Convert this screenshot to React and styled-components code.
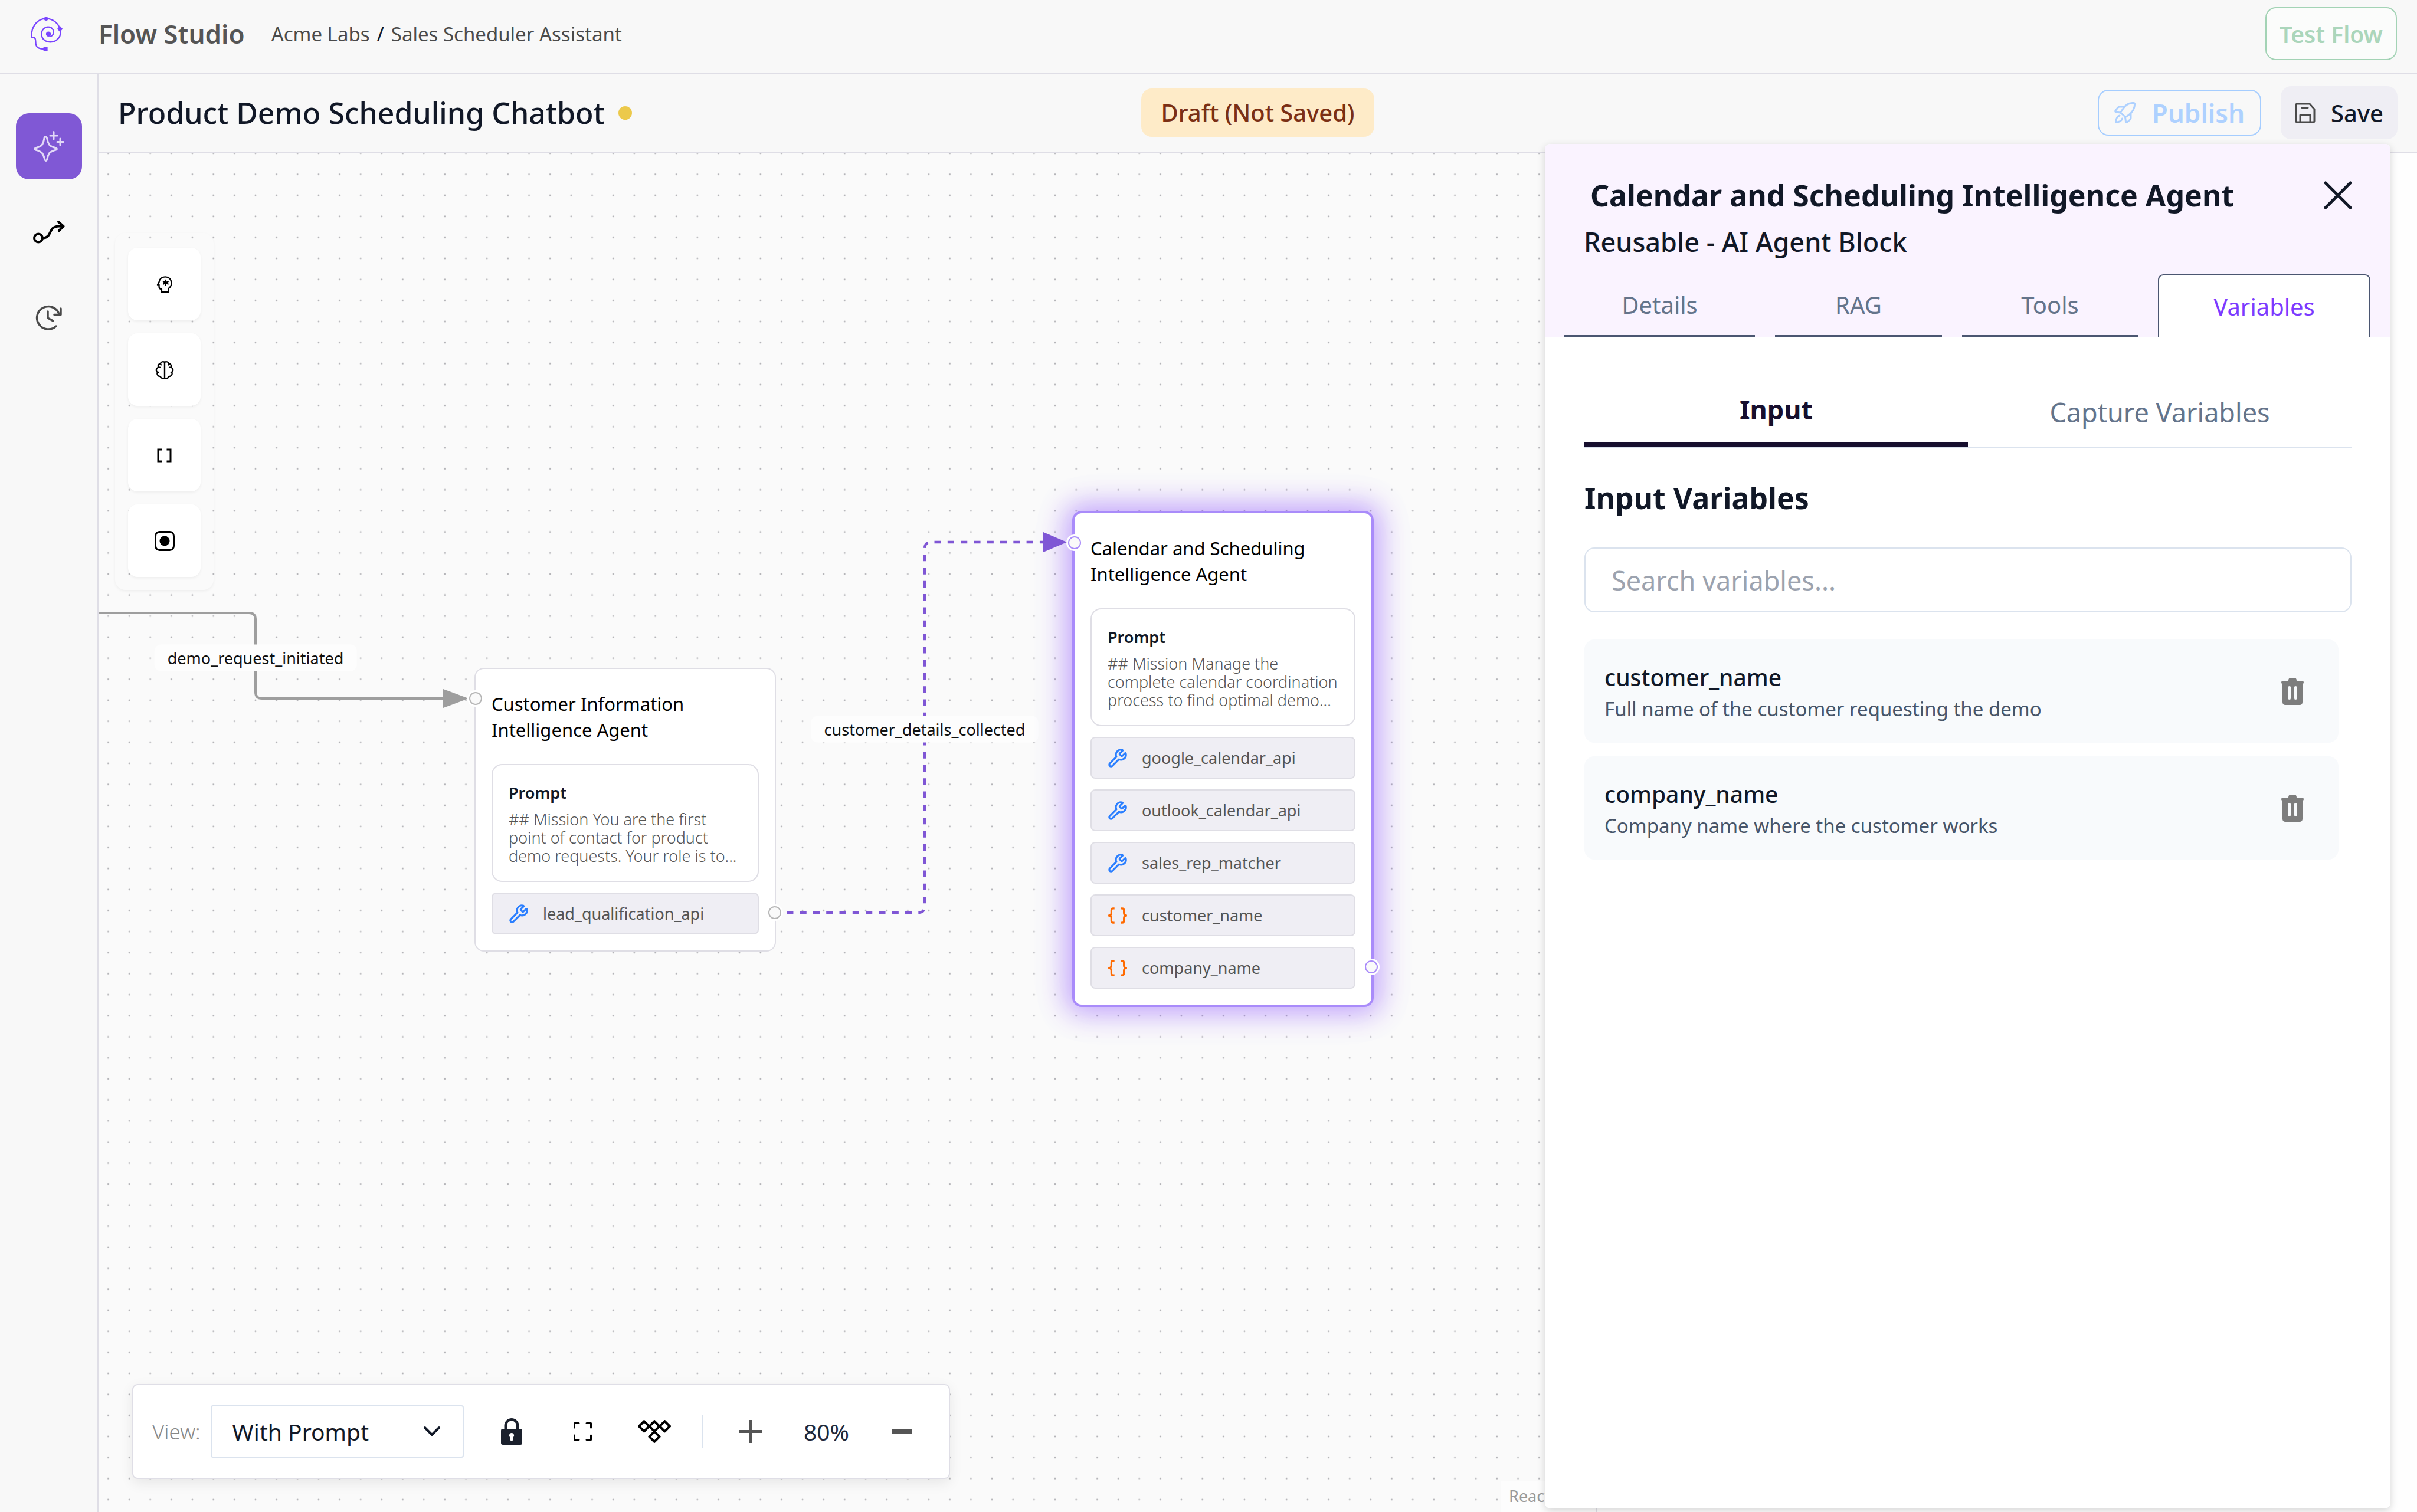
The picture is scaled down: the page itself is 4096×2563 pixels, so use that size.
import React from "react";
import styled, { createGlobalStyle, css } from "styled-components";
import { Wrench } from "lucide-react";

const GlobalStyle = createGlobalStyle`
  *, *::before, *::after { box-sizing: border-box; }
  html, body { margin: 0; padding: 0; }
  body {
    font-family: "Noto Sans", sans-serif;
    color: #111827;
    background: #f8f8f8;
    overflow: hidden;
  }
  button, input, select { font-family: inherit; margin: 0; }
  h1, h2, h3, p, ul { margin: 0; padding: 0; }
  ul { list-style: none; }
  svg { display: block; flex: none; }
`;

/* ---------- shell ---------- */

const Shell = styled.div`
  display: flex;
  flex-direction: column;
  height: 100vh;
`;

const TopBar = styled.header`
  display: flex;
  align-items: center;
  padding: 12px 34px 21px 49px;
  border-bottom: 2px solid #dfdee6;
`;

const Brand = styled.div`
  margin-left: 58px;
  font-size: 44px;
  line-height: 60px;
  font-weight: 600;
  color: #555;
`;

const Breadcrumb = styled.nav`
  display: flex;
  gap: 12px;
  margin-left: 45px;
  font-size: 33px;
  line-height: 45px;

  a {
    color: #4a4a4a;
    text-decoration: none;
  }
`;

const Button = styled.button`
  display: flex;
  align-items: center;
  justify-content: center;
  height: ${(p) => p.$height}px;
  padding: 0 22px;
  border: 2px solid transparent;
  border-radius: 18px;
  background: transparent;
  font-size: 40px;
  font-weight: 500;
`;

const TestButton = styled(Button)`
  margin-left: auto;
  border-color: #a3d3b5;
  background: #fbfcfb;
  color: #abd6bb;
  font-size: 39px;
  font-weight: 600;
`;

const PublishButton = styled(Button)`
  gap: 28px;
  padding: 0 26px;
  border-color: #a5cdff;
  color: #aed1ff;
  font-size: 44px;
  font-weight: 600;
`;

const SaveButton = styled(Button)`
  gap: 26px;
  background: #efeef4;
  color: #111827;
`;

const Body = styled.div`
  display: flex;
  flex: 1;
  min-height: 0;
`;

const Sidebar = styled.nav`
  display: flex;
  flex-direction: column;
  align-items: center;
  gap: 33px;
  flex: none;
  width: 167px;
  padding-top: 67px;
  border-right: 2px solid #dfdee6;
`;

const SideButton = styled.button`
  display: grid;
  place-items: center;
  width: 112px;
  height: 112px;
  padding: 0;
  border: 0;
  border-radius: 22px;
  background: ${(p) => (p.$active ? "#8058d5" : "transparent")};
  color: ${(p) => p.$color};
`;

const Main = styled.main`
  display: flex;
  flex: 1;
  flex-direction: column;
  min-width: 0;
`;

const TitleBar = styled.div`
  display: grid;
  grid-template-columns: 1fr auto 1fr;
  align-items: center;
  height: 134px;
  padding: 0 33px;
  border-bottom: 2px solid #dfdee6;
`;

const FlowTitle = styled.h1`
  display: flex;
  align-items: center;
  gap: 23px;
  font-size: 50px;
  line-height: 66px;
  font-weight: 500;
`;

const UnsavedDot = styled.span`
  width: 23px;
  height: 23px;
  border-radius: 50%;
  background: #ecc94b;
`;

const StatusBadge = styled.div`
  padding: 11px 33px;
  border-radius: 18px;
  background: #feebc8;
  color: #7b2f14;
  font-size: 40px;
  line-height: 60px;
  font-weight: 500;
`;

const TitleActions = styled.div`
  display: flex;
  align-items: center;
  justify-content: flex-end;
  gap: 33px;
`;

const Workspace = styled.div`
  display: flex;
  flex: 1;
  min-height: 0;
`;

/* ---------- canvas ---------- */

const Canvas = styled.section`
  position: relative;
  flex: 1;
  min-width: 0;
  overflow: hidden;
  background: #fafafa;
`;

const CanvasLayer = styled.svg`
  position: absolute;
  inset: 0;
  width: 100%;
  height: 100%;
  pointer-events: none;
`;

const Palette = styled.div`
  position: absolute;
  left: 28px;
  top: 136px;
  display: flex;
  flex-direction: column;
  gap: 22px;
  padding: 25px 22px 22px;
  border-radius: 18px;
  box-shadow: 0 2px 5px rgba(0, 0, 0, 0.05);
`;

const PaletteButton = styled.button`
  display: grid;
  place-items: center;
  width: 123px;
  height: 123px;
  padding: 0;
  border: 0;
  border-radius: 16px;
  background: #fff;
  color: #000;
  box-shadow: 0 2px 5px rgba(0, 0, 0, 0.05);
`;

const EdgeLabel = styled.div`
  position: absolute;
  left: ${(p) => p.$x}px;
  top: ${(p) => p.$y}px;
  transform: translate(-50%, -50%);
  padding: 2px 22px;
  border-radius: 11px;
  background: #fdfdfd;
  color: #111;
  font-size: 27px;
  line-height: 41px;
  white-space: nowrap;
`;

const NodeCard = styled.article`
  position: absolute;
  left: ${(p) => p.$x}px;
  top: ${(p) => p.$y}px;
  display: flex;
  flex-direction: column;
  gap: 18px;
  width: 511px;
  padding: 37px 27px 27px;
  border-radius: 16px;
  background: #fff;
  ${(p) =>
    p.$selected
      ? css`
          border: 4px solid #a98bfa;
          box-shadow: 0 0 45px 11px rgba(124, 58, 255, 0.4), 0 0 67px 11px rgba(124, 58, 255, 0.08);
        `
      : css`
          border: 2px solid #dfdee5;
        `}
`;

const NodeTitle = styled.h3`
  margin-bottom: 18px;
  font-size: 31px;
  line-height: 44px;
  font-weight: 400;
  color: #000;
`;

const PromptBox = styled.div`
  padding: 27px;
  border: 2px solid #dfdee5;
  border-radius: 18px;
`;

const PromptLabel = styled.div`
  margin-bottom: 9px;
  font-size: 27px;
  line-height: 40px;
  font-weight: 600;
`;

const PromptText = styled.p`
  font-size: 27px;
  line-height: 31px;
  font-weight: 300;
  color: #555;
`;

const Resources = styled.ul`
  display: flex;
  flex-direction: column;
  gap: 18px;
`;

const Resource = styled.li`
  display: flex;
  align-items: center;
  gap: 24px;
  height: 71px;
  padding: 0 27px;
  border: 2px solid #dfdee5;
  border-radius: 8px;
  background: #efeef4;
  color: #555;
  font-size: 27px;
`;

const Handle = styled.span`
  position: absolute;
  width: 22px;
  height: 22px;
  border: 2px solid ${(p) => (p.$selected ? "#a98bfa" : "#b5b5b5")};
  border-radius: 50%;
  background: #fafafa;
  box-shadow: 0 0 0 3px #fff;
  ${(p) => (p.$side === "left" ? "left: -11px; top: 39px;" : "right: -11px; bottom: 53px;")}
`;

const Controls = styled.div`
  position: absolute;
  left: 57px;
  bottom: 56px;
  display: flex;
  align-items: center;
  gap: 40px;
  height: 161px;
  padding: 0 39px 0 32px;
  border: 2px solid #dfdee6;
  border-radius: 9px;
  background: #fff;
  box-shadow: 0 7px 22px rgba(0, 0, 0, 0.08);
`;

const ViewField = styled.div`
  position: relative;
  display: flex;
  align-items: center;
  gap: 18px;

  label {
    color: #888;
    font-size: 35px;
    font-weight: 300;
  }

  svg {
    position: absolute;
    right: 39px;
    pointer-events: none;
  }
`;

const ViewSelect = styled.select`
  appearance: none;
  width: 429px;
  height: 89px;
  padding: 0 80px 0 34px;
  border: 2px solid #dbe3ee;
  border-radius: 4px;
  background: #fff;
  color: #111827;
  font-size: 39px;
`;

const ControlButton = styled.button`
  display: grid;
  place-items: center;
  width: 81px;
  height: 81px;
  padding: 0;
  border: 0;
  background: transparent;
  color: ${(p) => p.$color || "#000"};
`;

const Divider = styled.span`
  width: 2px;
  height: 56px;
  background: #dbe3ee;
`;

const ZoomValue = styled.output`
  width: 96px;
  text-align: center;
  color: #1e293b;
  font-size: 39px;
`;

const Attribution = styled.a`
  position: absolute;
  right: 0;
  bottom: 0;
  padding: 7px 13px 8px;
  background: rgba(255, 255, 255, 0.6);
  color: #999;
  font-size: 27px;
  line-height: 38px;
  text-decoration: none;
`;

/* ---------- inspector ---------- */

const Inspector = styled.aside`
  position: relative;
  flex: none;
  width: 1391px;
  border-left: 2px solid #dfdee6;
  background: #fefefe;
`;

const Panel = styled.section`
  position: absolute;
  left: -89px;
  right: 45px;
  top: -15px;
  bottom: 6px;
  display: flex;
  flex-direction: column;
  border-radius: 9px;
  background: #fff;
  box-shadow: 0 4px 14px rgba(0, 0, 0, 0.16);
`;

const PanelHeader = styled.header`
  padding: 54px 34px 0 33px;
  border-radius: 9px 9px 0 0;
  background: #faf3ff;
`;

const PanelHeading = styled.div`
  display: flex;
  align-items: center;
  justify-content: space-between;
  padding: 0 31px 0 44px;
`;

const SectionTitle = styled.h2`
  font-size: 50px;
  line-height: 66px;
  font-weight: 700;
`;

const PanelSubtitle = styled.p`
  padding: 16px 33px 25px;
  font-size: 45px;
  line-height: 60px;
  font-weight: 500;
`;

const CloseButton = styled.button`
  display: grid;
  place-items: center;
  padding: 0;
  border: 0;
  background: transparent;
  color: #111827;
`;

const TabRow = styled.div`
  display: grid;
  grid-template-columns: 323fr 283fr 298fr 360fr;
  gap: 34px;
`;

const Tab = styled.button`
  height: 106px;
  padding: 0;
  font-size: 40px;
  ${(p) =>
    p.$active
      ? css`
          border: 2px solid #4b5671;
          border-bottom: 0;
          border-radius: 9px 9px 0 0;
          background: #fff;
          color: #7c3aff;
        `
      : css`
          border: 0;
          border-bottom: 3px solid #4b5671;
          background: transparent;
          color: #64748b;
        `}
`;

const PanelBody = styled.div`
  padding: 67px 66px 0 67px;
`;

const SubTabRow = styled.div`
  display: grid;
  grid-template-columns: 1fr 1fr;
  border-bottom: 2px solid #dbe3ee;
`;

const SubTab = styled.button`
  height: 120px;
  padding: 0;
  border: 0;
  border-bottom: ${(p) => (p.$active ? "9px solid #170f2e" : "0")};
  background: transparent;
  color: ${(p) => (p.$active ? "#170f2e" : "#64748b")};
  font-size: 45px;
  font-weight: ${(p) => (p.$active ? 700 : 400)};
`;

const VariablesSection = styled.section`
  padding-top: 51px;
`;

const SearchInput = styled.input`
  display: block;
  width: 100%;
  height: 110px;
  margin: 51px 0 46px;
  padding: 0 44px;
  border: 2px solid #dbe3ee;
  border-radius: 17px;
  background: #fff;
  color: #111827;
  font-size: 45px;

  &::placeholder {
    color: #9ca3af;
    opacity: 1;
  }
`;

const VariableList = styled.ul`
  display: flex;
  flex-direction: column;
  gap: 23px;
  padding-right: 22px;
`;

const VariableCard = styled.li`
  display: flex;
  align-items: center;
  justify-content: space-between;
  padding: 34px 45px 34px 34px;
  border-radius: 17px;
  background: #f8fafc;
`;

const VariableName = styled.div`
  font-size: 39px;
  line-height: 60px;
  font-weight: 500;
`;

const VariableHint = styled.p`
  font-size: 33px;
  line-height: 47px;
  color: #475569;
`;

const DeleteButton = styled.button`
  display: grid;
  place-items: center;
  width: 66px;
  height: 66px;
  padding: 0;
  border: 0;
  background: transparent;
  color: #7d7d7d;
`;

/* ---------- icons ---------- */

const Stroke = ({ w, h, box, sw, children }) => (
  <svg
    width={w}
    height={h}
    viewBox={box || `0 0 ${w} ${h}`}
    fill="none"
    stroke="currentColor"
    strokeWidth={sw}
    strokeLinecap="round"
    strokeLinejoin="round"
    aria-hidden="true"
  >
    {children}
  </svg>
);

const Logo = () => (
  <svg width="60" height="62" viewBox="124 66 250 266" fill="none" stroke="#7a45ff" strokeWidth="10" aria-hidden="true">
    <path d="M138 228C136 145 182 90 245 90C300 90 336 128 345 165" />
    <path d="M138 225H148C172 225 168 248 170 272C172 298 190 311 230 311" />
    <path d="M346 165C362 215 328 260 275 260C236 260 212 233 212 202C212 172 234 150 260 150C286 150 300 170 300 188C300 208 286 221 268 219" />
    <g fill="#7a45ff" stroke="none">
      <circle cx="262" cy="202" r="18" />
      <circle cx="245" cy="91" r="14" />
      <path d="M346 143L366 165L346 187L326 165Z" />
      <rect x="226" y="296" width="30" height="31" />
    </g>
  </svg>
);

const SparkleIcon = () => (
  <Stroke w={52} h={53} sw={3}>
    <path d="M20 10Q22 10 22.500 12C25 24 27 26 38 29Q41 30.500 38 32C27 35 25 37 22.500 49Q21 52 19 49C16 37 14 35 3 32Q0 30.500 3 29C14 26 16 24 18 12Q18.500 10 20 10Z" />
    <path d="M34 1.500V14M28 8H40M45 13V24M40 18.500H50.500" />
  </Stroke>
);

const RouteIcon = () => (
  <Stroke w={54} h={39} sw={4}>
    <circle cx="9" cy="29.500" r="7" />
    <path d="M16 29.500C34 29.500 24 9.500 44 9.500H51M43 2L51.500 9.500L44 17" />
  </Stroke>
);

const HistoryIcon = () => (
  <Stroke w={46} h={43} sw={3.5}>
    <path d="M35 36A19.300 19.300 0 1 1 40 15M43 6V16.500H32M21 11V22L30 27" />
  </Stroke>
);

const HeadIcon = () => (
  <Stroke w={28} h={30} box="122 90 120 130" sw={10}>
    <path d="M186 100C160 100 143 117 141 138L130 158H141V176Q143 190 160 190V212H210V186C226 175 233 160 232 142C229 115 210 100 186 100Z" />
    <path d="M190 124V162M173 134L207 153M207 134L173 153" />
  </Stroke>
);

const BrainIcon = () => (
  <Stroke w={34} h={34} box="108 706 144 144" sw={10}>
    <path d="M180 722V836" />
    <path d="M180 723C166 715 152 722 150 733C137 734 129 746 134 760C119 765 115 786 128 795C122 812 134 825 148 825C156 840 172 842 180 836M134 760H146M128 795H134M150 733L154 742" />
    <path d="M180 723C194 715 208 722 210 733C223 734 231 746 226 760C241 765 245 786 232 795C238 812 226 825 212 825C204 840 188 842 180 836M226 760H214M232 795H226M210 733L206 742" />
  </Stroke>
);

const BracketsIcon = () => (
  <svg width="25" height="24" viewBox="0 0 25 24" fill="none" stroke="currentColor" strokeWidth="3" aria-hidden="true">
    <path d="M8.500 2H2V22H8.500M16.500 2H23V22H16.500" />
  </svg>
);

const RecordIcon = () => (
  <Stroke w={34} h={34} sw={3}>
    <rect x="1.500" y="1.500" width="31" height="31" rx="7" />
    <circle cx="17" cy="17" r="8.500" fill="currentColor" stroke="none" />
  </Stroke>
);

const BracesIcon = () => (
  <svg width="34" height="28" viewBox="0 0 35 29" fill="none" stroke="#ff6a00" strokeWidth="3.300" aria-hidden="true">
    <path d="M12 2H9.500Q6.500 2 6.500 5V10Q6.500 14.500 1 14.500Q6.500 14.500 6.500 19V24Q6.500 27 9.500 27H12" />
    <path d="M23 2H25.500Q28.500 2 28.500 5V10Q28.500 14.500 34 14.500Q28.500 14.500 28.500 19V24Q28.500 27 25.500 27H23" />
  </svg>
);

const RocketIcon = () => (
  <Stroke w={36} h={36} sw={3}>
    <path d="M33.500 1.500C25 1 19 5 15 11L10.500 18L19 25.500C27 21 35 14 34.500 2.500Z" />
    <path d="M16 8H9Q7 8 6 9.500L2 14.500Q1 16.500 3 17L10.500 18M28 19.500V27Q28 28.500 27 29.500L22 34Q20 35 19.500 33L18.500 25.500" />
    <path d="M9 23C4 24 3 29 2.500 34C8 34 12.500 32.500 13.500 28" />
  </Stroke>
);

const SaveIcon = () => (
  <Stroke w={35} h={35} sw={3}>
    <path
      stroke="#4a4a4a"
      d="M4 2H25L33 11V31Q33 33 31 33H4Q2 33 2 31V4Q2 2 4 2ZM9 33V21.500Q9 20.500 10 20.500H25Q26 20.500 26 21.500V33M12 8.500H22"
    />
  </Stroke>
);

const LockIcon = () => (
  <svg width="36" height="45" viewBox="0 0 36 45" fill="currentColor" fillRule="evenodd" aria-hidden="true">
    <path d="M5.500 18V12.500A12.500 12.500 0 0 1 30.500 12.500V18H33A3 3 0 0 1 36 21V42A3 3 0 0 1 33 45H3A3 3 0 0 1 0 42V21A3 3 0 0 1 3 18ZM10 18H26V12.500A8 8 0 0 0 10 12.500ZM18 25A4 4 0 0 0 16 32.500V37A2 2 0 0 0 20 37V32.500A4 4 0 0 0 18 25Z" />
  </svg>
);

const FitIcon = () => (
  <Stroke w={31} h={31} sw={3}>
    <path d="M9 1.500H1.500V9M22 1.500H29.500V9M1.500 22V29.500H9M29.500 22V29.500H22" />
  </Stroke>
);

const LayoutIcon = () => (
  <Stroke w={56} h={39} sw={4}>
    {[[10.5, 10.7], [28, 10.7], [45.5, 10.7], [28, 28.3]].map(([x, y]) => (
      <path key={`${x}-${y}`} d={`M${x} ${y - 8.6}l8.600 8.600l-8.600 8.600l-8.600 -8.600Z`} />
    ))}
  </Stroke>
);

const TrashIcon = () => (
  <svg width="38" height="46" viewBox="0 0 38 46" fill="currentColor" fillRule="evenodd" aria-hidden="true">
    <path d="M12 5Q12 0 16 0H22Q26 0 26 5H35Q38 5 38 8Q38 10 36 10V41Q36 46 31 46H7Q2 46 2 41V10Q0 10 0 8Q0 5 3 5ZM11.500 16V35Q11.500 37 14 37Q16 37 16 35V16Q16 14 14 14Q11.500 14 11.500 16ZM22 16V35Q22 37 24 37Q26.500 37 26.500 35V16Q26.500 14 24 14Q22 14 22 16Z" />
  </svg>
);

/* ---------- data ---------- */

const DOT_GAP = 35.66;

const sideItems = [
  { name: "Build", Icon: SparkleIcon, active: true, color: "#e2d8f7" },
  { name: "Routes", Icon: RouteIcon, color: "#000" },
  { name: "History", Icon: HistoryIcon, color: "#4a4a4a" },
];

const paletteItems = [
  { name: "AI agent block", Icon: HeadIcon },
  { name: "Knowledge block", Icon: BrainIcon },
  { name: "Code block", Icon: BracketsIcon },
  { name: "End block", Icon: RecordIcon },
];

const nodes = [
  {
    x: 637,
    y: 873,
    title: "Customer Information Intelligence Agent",
    prompt: "## Mission You are the first point of contact for product demo requests. Your role is to...",
    tools: ["lead_qualification_api"],
    variables: [],
  },
  {
    x: 1650,
    y: 607,
    selected: true,
    title: "Calendar and Scheduling Intelligence Agent",
    prompt: "## Mission Manage the complete calendar coordination process to find optimal demo...",
    tools: ["google_calendar_api", "outlook_calendar_api", "sales_rep_matcher"],
    variables: ["customer_name", "company_name"],
  },
];

const variables = [
  { name: "customer_name", hint: "Full name of the customer requesting the demo" },
  { name: "company_name", hint: "Company name where the customer works" },
];

/* ---------- parts ---------- */

function FlowNode({ x, y, selected, title, prompt, tools, variables }) {
  return (
    <NodeCard $x={x} $y={y} $selected={selected}>
      <Handle $side="left" $selected={selected} />
      <NodeTitle>{title}</NodeTitle>
      <PromptBox>
        <PromptLabel>Prompt</PromptLabel>
        <PromptText>{prompt}</PromptText>
      </PromptBox>
      <Resources>
        {tools.map((tool) => (
          <Resource key={tool}>
            <Wrench size={34} color="#2b7fff" strokeWidth={2.2} />
            {tool}
          </Resource>
        ))}
        {variables.map((variable) => (
          <Resource key={variable}>
            <BracesIcon />
            {variable}
          </Resource>
        ))}
      </Resources>
      <Handle $side="right" $selected={selected} />
    </NodeCard>
  );
}

function FlowCanvas() {
  return (
    <Canvas>
      <CanvasLayer aria-hidden="true">
        <defs>
          <pattern id="dots" x="-1.500" y="-17" width={DOT_GAP} height={DOT_GAP} patternUnits="userSpaceOnUse">
            <circle cx={DOT_GAP / 2} cy={DOT_GAP / 2} r="1.400" fill="#b4b4b8" />
          </pattern>
        </defs>
        <rect width="100%" height="100%" fill="url(#dots)" />
        <g fill="none" strokeWidth="4">
          <path d="M0 780H255Q266 780 266 791V914Q266 925 277 925H590" stroke="#9e9e9e" />
          <path
            d="M1144 1288H1389Q1400 1288 1400 1277V671Q1400 660 1411 660H1606"
            stroke="#7f56d5"
            strokeWidth="4.500"
            strokeDasharray="11.150 11.150"
          />
        </g>
        <path d="M584 909L627 925L584 941Z" fill="#9e9e9e" />
      </CanvasLayer>
      <EdgeLabel $x={266} $y={856}>demo_request_initiated</EdgeLabel>
      <EdgeLabel $x={1400} $y={977}>customer_details_collected</EdgeLabel>
      {nodes.map((node) => (
        <FlowNode key={node.title} {...node} />
      ))}
      <CanvasLayer aria-hidden="true">
        <path d="M1601 643L1641 660L1601 677Z" fill="#7f56d5" />
      </CanvasLayer>
      <Palette>
        {paletteItems.map(({ name, Icon }) => (
          <PaletteButton key={name} aria-label={name}>
            <Icon />
          </PaletteButton>
        ))}
      </Palette>
      <Controls>
        <ViewField>
          <label htmlFor="view">View:</label>
          <ViewSelect id="view" defaultValue="prompt">
            <option value="prompt">With Prompt</option>
          </ViewSelect>
          <Stroke w={30} h={20} sw={4}>
            <path d="M3 3L15 15L27 3" />
          </Stroke>
        </ViewField>
        <ControlButton aria-label="Lock canvas" $color="#1a202c"><LockIcon /></ControlButton>
        <ControlButton aria-label="Fit view"><FitIcon /></ControlButton>
        <ControlButton aria-label="Auto layout"><LayoutIcon /></ControlButton>
        <Divider />
        <ControlButton aria-label="Zoom in" $color="#555">
          <svg width="39" height="39" viewBox="0 0 39 39" stroke="currentColor" strokeWidth="5" aria-hidden="true">
            <path d="M19.500 0V39M0 19.500H39" />
          </svg>
        </ControlButton>
        <ZoomValue>80%</ZoomValue>
        <ControlButton aria-label="Zoom out" $color="#555">
          <svg width="34" height="7" viewBox="0 0 34 7" fill="currentColor" aria-hidden="true">
            <rect width="34" height="7" />
          </svg>
        </ControlButton>
      </Controls>
      <Attribution href="#react-flow">React Flow</Attribution>
    </Canvas>
  );
}

function VariablesPanel() {
  return (
    <Inspector>
      <Panel>
        <PanelHeader>
          <PanelHeading>
            <SectionTitle>Calendar and Scheduling Intelligence Agent</SectionTitle>
            <CloseButton aria-label="Close panel">
              <Stroke w={48} h={48} sw={5}>
                <path d="M3 3L45 45M45 3L3 45" />
              </Stroke>
            </CloseButton>
          </PanelHeading>
          <PanelSubtitle>Reusable - AI Agent Block</PanelSubtitle>
          <TabRow role="tablist">
            <Tab role="tab">Details</Tab>
            <Tab role="tab">RAG</Tab>
            <Tab role="tab">Tools</Tab>
            <Tab role="tab" aria-selected="true" $active>Variables</Tab>
          </TabRow>
        </PanelHeader>
        <PanelBody>
          <SubTabRow role="tablist">
            <SubTab role="tab" aria-selected="true" $active>Input</SubTab>
            <SubTab role="tab">Capture Variables</SubTab>
          </SubTabRow>
          <VariablesSection>
            <SectionTitle as="h3">Input Variables</SectionTitle>
            <SearchInput type="search" aria-label="Search variables" placeholder="Search variables..." />
            <VariableList>
              {variables.map(({ name, hint }) => (
                <VariableCard key={name}>
                  <div>
                    <VariableName>{name}</VariableName>
                    <VariableHint>{hint}</VariableHint>
                  </div>
                  <DeleteButton aria-label={`Delete ${name}`}><TrashIcon /></DeleteButton>
                </VariableCard>
              ))}
            </VariableList>
          </VariablesSection>
        </PanelBody>
      </Panel>
    </Inspector>
  );
}

export default function App() {
  return (
    <>
      <GlobalStyle />
      <Shell>
        <TopBar>
          <Logo />
          <Brand>Flow Studio</Brand>
          <Breadcrumb aria-label="Breadcrumb">
            <a href="#labs">Acme Labs</a>
            <span>/</span>
            <a href="#assistant">Sales Scheduler Assistant</a>
          </Breadcrumb>
          <TestButton $height={90}>Test Flow</TestButton>
        </TopBar>
        <Body>
          <Sidebar>
            {sideItems.map(({ name, Icon, active, color }) => (
              <SideButton key={name} aria-label={name} $active={active} $color={color}>
                <Icon />
              </SideButton>
            ))}
          </Sidebar>
          <Main>
            <TitleBar>
              <FlowTitle>
                Product Demo Scheduling Chatbot
                <UnsavedDot />
              </FlowTitle>
              <StatusBadge>Draft (Not Saved)</StatusBadge>
              <TitleActions>
                <PublishButton $height={78}>
                  <RocketIcon />
                  Publish
                </PublishButton>
                <SaveButton $height={90}>
                  <SaveIcon />
                  Save
                </SaveButton>
              </TitleActions>
            </TitleBar>
            <Workspace>
              <FlowCanvas />
              <VariablesPanel />
            </Workspace>
          </Main>
        </Body>
      </Shell>
    </>
  );
}
